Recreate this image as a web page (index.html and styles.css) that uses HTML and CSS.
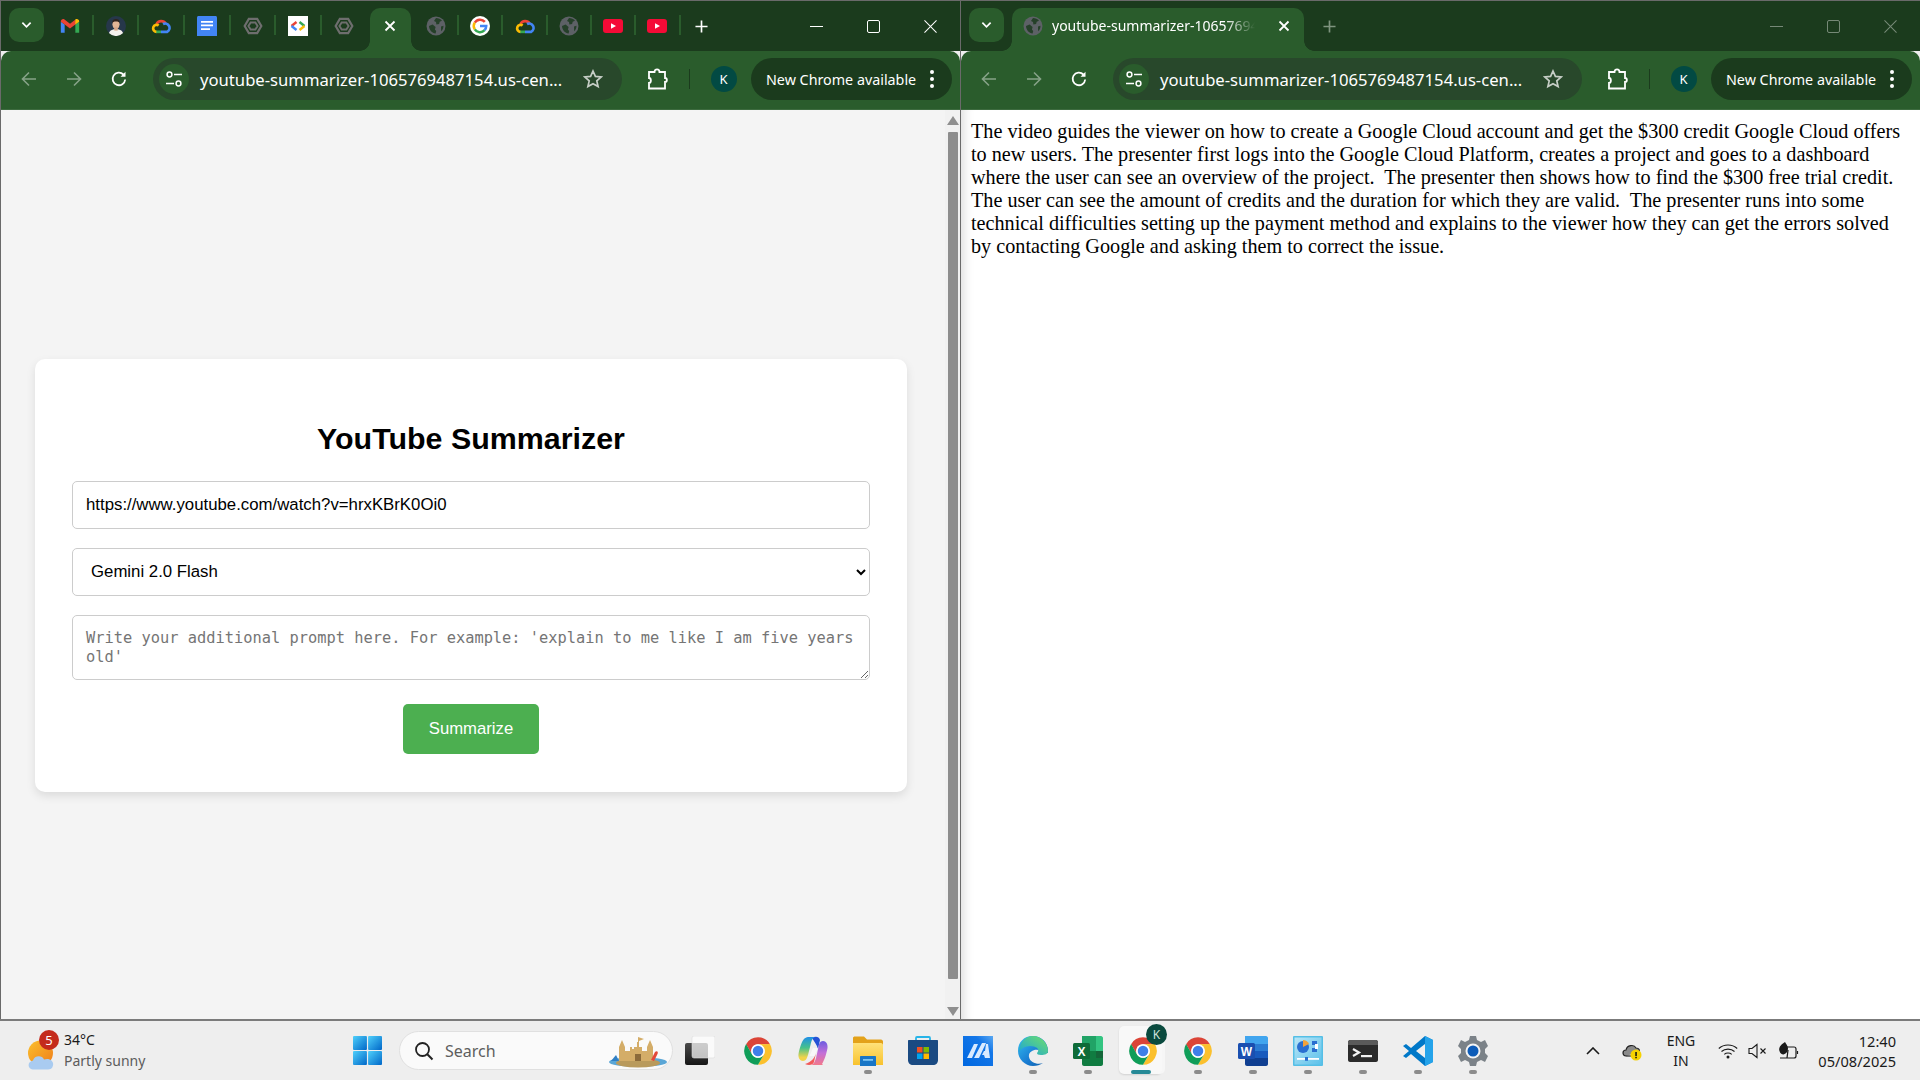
FILE: index.html
```html
<!DOCTYPE html>
<html lang="en">
<head>
<meta charset="utf-8">
<title>YouTube Summarizer</title>
<link rel="stylesheet" href="styles.css">
</head>
<body>
<svg class="defs" aria-hidden="true">
  <defs>
    <linearGradient id="gEdge" x1="0" y1="0" x2="1" y2="1"><stop offset="0" stop-color="#35c1f1"/><stop offset=".55" stop-color="#1b7fd4"/><stop offset="1" stop-color="#0c59a4"/></linearGradient>
    <linearGradient id="gEdge2" x1="0" y1="1" x2="1" y2="0"><stop offset="0" stop-color="#1aa3d9"/><stop offset="1" stop-color="#6fe06a"/></linearGradient>
    <linearGradient id="gCop1" x1="0" y1="0" x2="0" y2="1"><stop offset="0" stop-color="#1f8fe8"/><stop offset=".45" stop-color="#47c28a"/><stop offset=".85" stop-color="#f1d34a"/></linearGradient>
    <linearGradient id="gCop2" x1="0" y1="0" x2="0" y2="1"><stop offset="0" stop-color="#6a5be0"/><stop offset=".5" stop-color="#c36fd8"/><stop offset="1" stop-color="#f2788a"/></linearGradient>
    <linearGradient id="gWin" x1="0" y1="0" x2="1" y2="1"><stop offset="0" stop-color="#4fd0fb"/><stop offset="1" stop-color="#0067c8"/></linearGradient>
    <linearGradient id="gFolder" x1="0" y1="0" x2="0" y2="1"><stop offset="0" stop-color="#ffe27a"/><stop offset="1" stop-color="#f8c22e"/></linearGradient>
    <linearGradient id="gTile" x1="0" y1="1" x2="1" y2="0"><stop offset="0" stop-color="#0067e0"/><stop offset=".7" stop-color="#1477e8"/><stop offset="1" stop-color="#5aa8f2"/></linearGradient>
    <linearGradient id="gTask" x1="0" y1="0" x2="1" y2="1"><stop offset="0" stop-color="#b9e6f7"/><stop offset="1" stop-color="#5cc1ea"/></linearGradient>
    <linearGradient id="gSun" x1="0" y1="0" x2="1" y2="1"><stop offset="0" stop-color="#fbc02d"/><stop offset="1" stop-color="#ef7d1a"/></linearGradient>
    <linearGradient id="gDark" x1="0" y1="0" x2="0" y2="1"><stop offset="0" stop-color="#4a4a4a"/><stop offset="1" stop-color="#161616"/></linearGradient>

    <symbol id="chrome" viewBox="0 0 24 24">
      <path fill="#db4437" d="M2.47 6.5A11 11 0 0 1 21.53 6.5H12A5.5 5.5 0 0 0 7.24 14.75Z"/>
      <path fill="#fbc02d" d="M2.47 6.5A11 11 0 0 1 21.53 6.5H12A5.5 5.5 0 0 0 7.24 14.75Z" transform="rotate(120 12 12)"/>
      <path fill="#0f9d58" d="M2.47 6.5A11 11 0 0 1 21.53 6.5H12A5.5 5.5 0 0 0 7.24 14.75Z" transform="rotate(240 12 12)"/>
      <circle cx="12" cy="12" r="5.4" fill="#fff"/><circle cx="12" cy="12" r="4.2" fill="#3f7fe8"/>
    </symbol>
    <symbol id="gcloud" viewBox="0 0 24 24" fill="none" stroke-width="3.2">
      <path stroke="#ea4335" d="M6.6 9.6A6.2 6.2 0 0 1 17.6 9.2"/>
      <path stroke="#4285f4" d="M14.4 9.6A4.2 4.2 0 0 1 19.4 19H12"/>
      <path stroke="#34a853" d="M6 19H12"/>
      <path stroke="#fbbc04" d="M6.4 19A4.2 4.2 0 1 1 9.2 11.4"/>
    </symbol>
    <symbol id="gmail" viewBox="0 0 24 24">
      <path fill="#4285f4" d="M1 5.5V20h4.6V10.3L1 7Z"/>
      <path fill="#34a853" d="M23 5.5V20h-4.6V10.3L23 7Z"/>
      <path fill="#ea4335" d="M1 6.5C1 4 3.7 2.9 5.4 4.2L12 9.2l6.6-5 1 5L12 15 5.6 10.2 1 7Z"/>
      <path fill="#fbbc04" d="M18.4 4.3C20.300 2.900 23 4 23 6.500V7l-4.600 3.300Z"/>
    </symbol>
    <symbol id="avatar" viewBox="0 0 24 24">
      <circle cx="12" cy="12" r="12" fill="#26374a"/>
      <path fill="#f4f1ec" d="M3.500 20.500C5 16.500 9 16 12 16s7 .5 8.500 4.500A12 12 0 0 1 3.500 20.500Z"/>
      <ellipse cx="12" cy="10" rx="4.300" ry="5.600" fill="#e2b596"/>
      <rect x="10" y="13" width="4" height="4.500" fill="#d9a888"/>
      <path fill="#30241e" d="M7.500 9C7 4.500 10 3.600 12 3.600S17 4.500 16.500 9c-.5-2-2-2.500-4.500-2.500S8 7 7.500 9Z"/>
    </symbol>
    <symbol id="docs" viewBox="0 0 20 20">
      <path fill="#4285f4" d="M0 1.500C0 .7.700 0 1.500 0h17c.8 0 1.500.7 1.500 1.500v18.500H0Z"/>
      <path fill="#fff" d="M4 5h12v1.700H4ZM4 8.600h12v1.700H4ZM4 12.200h9v1.700H4Z"/>
    </symbol>
    <symbol id="hex" viewBox="0 0 24 24" fill="none" stroke="#6e6e6e">
      <path stroke-width="2.600" d="M7 3.500h10L22 12l-5 8.500H7L2 12Z"/>
      <path stroke-width="2.300" d="M9.200 7.800h5.600L17.500 12l-2.700 4.200H9.200L6.500 12Z"/>
    </symbol>
    <symbol id="devcode" viewBox="0 0 20 20">
      <rect width="20" height="20" fill="#fff"/>
      <path fill="none" stroke="#ea4335" stroke-width="2.400" d="M8.500 6 3.500 10"/><path fill="none" stroke="#4285f4" stroke-width="2.400" d="M3.500 10 8.500 14"/>
      <path fill="none" stroke="#34a853" stroke-width="2.400" d="M11.500 6 16.500 10"/><path fill="none" stroke="#fbbc04" stroke-width="2.400" d="M16.500 10 11.500 14"/>
    </symbol>
    <symbol id="globe" viewBox="0 0 20 20">
      <circle cx="10" cy="10" r="9.500" fill="#5d6166"/>
      <path fill="#1b3b1e" opacity=".85" d="M10 2c2.500 0 4.600 1 6 2.700l-2.300 1-.6 2.200-2.700.6-.4-2.500L8 5ZM3 10l3.600-1.500 3 2.400-.7 2.600 1.300 1.600-.6 2.400C6 17.300 3.200 14 3 10ZM15 10.500l2.500-.8c0 2.300-.9 4.200-2.400 5.500Z"/>
    </symbol>
    <symbol id="yt" viewBox="0 0 20 14">
      <rect width="20" height="14" rx="3" fill="#f40b36"/>
      <path fill="#fff" d="M8 4.200 13 7 8 9.800Z"/>
    </symbol>
    <symbol id="gg" viewBox="0 0 24 24">
      <circle cx="12" cy="12" r="12" fill="#fff"/>
      <path fill="none" stroke-width="3" stroke="#ea4335" d="M17.800 7A7.500 7.500 0 0 0 5.700 8"/>
      <path fill="none" stroke-width="3" stroke="#fbbc04" d="M5.700 8A7.500 7.500 0 0 0 5.700 16"/>
      <path fill="none" stroke-width="3" stroke="#34a853" d="M5.700 16A7.500 7.500 0 0 0 17.500 17"/>
      <path fill="none" stroke-width="3" stroke="#4285f4" d="M17.500 17A7.500 7.500 0 0 0 19.500 12H12"/>
    </symbol>
    <symbol id="chev" viewBox="0 0 12 8"><path d="M1.500 1.500 6 6l4.500-4.500" fill="none" stroke="#fff" stroke-width="1.900"/></symbol>
    <symbol id="closex" viewBox="0 0 12 12"><path d="M1.500 1.500l9 9M10.500 1.500l-9 9" fill="none" stroke="#fff" stroke-width="1.800"/></symbol>
    <symbol id="plus" viewBox="0 0 14 14"><path d="M7 .5v13M.5 7h13" fill="none" stroke="currentColor" stroke-width="1.800"/></symbol>
    <symbol id="back" viewBox="0 0 18 18"><path d="M16 9H2.500M9 2.500 2.500 9 9 15.500" fill="none" stroke="currentColor" stroke-width="1.600"/></symbol>
    <symbol id="fwd" viewBox="0 0 18 18"><path d="M2 9h13.500M9 2.500 15.500 9 9 15.500" fill="none" stroke="currentColor" stroke-width="1.600"/></symbol>
    <symbol id="reload" viewBox="0 0 18 18"><path d="M15.200 9.500A6.300 6.300 0 1 1 13.400 4.500" fill="none" stroke="currentColor" stroke-width="1.800"/><path d="M15.500 1.800v5h-5Z" fill="currentColor"/></symbol>
    <symbol id="tune" viewBox="0 0 18 18"><g fill="none" stroke="#fff" stroke-width="1.500"><circle cx="4.500" cy="4.500" r="2.400"/><circle cx="13.500" cy="13.500" r="2.400"/><path d="M9 4.500h8M1 13.500h8"/></g></symbol>
    <symbol id="star" viewBox="0 0 20 20"><path d="M10 2l2.400 5.400 5.800.6-4.400 3.900 1.300 5.700L10 14.700l-5.100 2.900 1.300-5.700L1.800 8l5.800-.6Z" fill="none" stroke="#c6cec6" stroke-width="1.700"/></symbol>
    <symbol id="puzzle" viewBox="0 0 22 22"><path d="M3 4h5.500c0-3.500 5-3.500 5 0H19v6c2.500 0 2.500 4 0 4v6.500H3V15c2.500 0 2.500-5 0-5Z" fill="none" stroke="#fff" stroke-width="1.800"/></symbol>
    <symbol id="dots" viewBox="0 0 6 20"><circle cx="3" cy="3" r="2" fill="#fff"/><circle cx="3" cy="10" r="2" fill="#fff"/><circle cx="3" cy="17" r="2" fill="#fff"/></symbol>

    <symbol id="start" viewBox="0 0 30 30"><g fill="url(#gWin)"><rect width="14.400" height="14.400" rx="1"/><rect x="15.600" width="14.400" height="14.400" rx="1"/><rect y="15.600" width="14.400" height="14.400" rx="1"/><rect x="15.600" y="15.600" width="14.400" height="14.400" rx="1"/></g></symbol>
    <symbol id="search" viewBox="0 0 20 20"><circle cx="8.500" cy="8.500" r="6.500" fill="none" stroke="#222" stroke-width="1.800"/><path d="M13.300 13.300 18.500 18.500" stroke="#222" stroke-width="2"/></symbol>
    <symbol id="castle" viewBox="0 0 60 34">
      <ellipse cx="30" cy="28" rx="29" ry="5" fill="#5aa6d6"/><ellipse cx="30" cy="29" rx="22" ry="4.500" fill="#b99a5c"/>
      <path fill="#d4ad68" d="M11 27V13l3-7 3 7v4h5v-4h2v2h2v-2h3V8h1V3l6 2-5 2v6h3v4h5v-4l3-7 3 7v14Z"/>
      <rect x="27" y="20" width="6" height="7" fill="#8b6a3a"/>
      <path fill="#e3483a" d="M47 18c2-2 4 0 2 3l-3 6-3-1Z"/>
      <path fill="#2f7fc4" d="M3 27l5-6 3 6Z"/>
    </symbol>
    <symbol id="weather" viewBox="0 0 28 30">
      <circle cx="12.500" cy="12.500" r="12.500" fill="url(#gSun)"/>
      <path fill="#a9cbf0" d="M6 29c-7 0-7-8-1-9 1-5 9-6 11-1 6-2 10 2 9 6-.5 3-3 4-5 4Z"/>
    </symbol>
    <symbol id="taskview" viewBox="0 0 30 29">
      <rect x="0" y="7" width="23" height="22" rx="2" fill="url(#gDark)"/>
      <rect x="7" y="0" width="23" height="22" rx="2" fill="#fff" fill-opacity=".72" stroke="#dcdcdc" stroke-width=".6"/>
    </symbol>
    <symbol id="copilot" viewBox="0 0 30 30">
      <path fill="#2552d6" d="M14 2C17 0 21 0 22 4L20 13C19 9 16 5 14 2Z"/>
      <path fill="#f25a5a" d="M7 28C11 30 15 29 16 26L18 17C17 22 13 26 7 28Z"/>
      <path fill="url(#gCop1)" d="M10 1H17C14 2 13.500 5 12.500 9L10 19C9 22 8 25 5 25 2 25 0 22 .5 18 1.500 12 4 5 6 3 7 2 8.500 1 10 1Z"/>
      <path fill="url(#gCop2)" d="M25 29H13C16 28.500 17 25 18 22L20.500 11C21 8 22 5 25 5 28 5 30 8 29.500 12 28.500 18 26 25 24 28Z"/>
      <path fill="#fff" opacity=".6" d="M15 12H20L16.500 20H11.500Z"/>
    </symbol>
    <symbol id="folder" viewBox="0 0 30 30" preserveAspectRatio="none">
      <path fill="#e3a21a" d="M0 2c0-1 .8-1.500 2-1.500h9l3 3h14c1 0 2 1 2 2v4H0Z"/>
      <path fill="url(#gFolder)" d="M0 7h28c1 0 2 1 2 2v20H0Z"/>
      <path fill="#1976c6" d="M8 20h14c.6 0 1 .4 1 1v9H7V21c0-.6.4-1 1-1Z"/>
      <rect x="10" y="23" width="10" height="1.800" fill="#7cc4f3"/>
    </symbol>
    <symbol id="store" viewBox="0 0 30 30" preserveAspectRatio="none">
      <path fill="none" stroke="#27b4e8" stroke-width="1.800" d="M8 5V2c0-.6.5-1 1-1h12c.5 0 1 .4 1 1v3"/>
      <path fill="#1a4a82" d="M1 4h28c.6 0 1 .4 1 1v19c0 3-2 5-5 5H5c-3 0-5-2-5-5V5c0-.6.4-1 1-1Z"/>
      <rect x="9" y="11" width="5.500" height="5.500" fill="#f25022"/><rect x="15.500" y="11" width="5.500" height="5.500" fill="#7fba00"/>
      <rect x="9" y="17.500" width="5.500" height="5.500" fill="#00a4ef"/><rect x="15.500" y="17.500" width="5.500" height="5.500" fill="#ffb900"/>
    </symbol>
    <symbol id="ma" viewBox="0 0 30 30">
      <rect width="30" height="30" fill="url(#gTile)"/>
      <path fill="#d9eaff" d="M11 8h4L9 22H4ZM19 7h4l-7 15h-5ZM23 8h2l2 14h-5l-1-3h-2l2-4h1Z"/>
    </symbol>
    <symbol id="edge" viewBox="0 0 30 30">
      <path fill="url(#gEdge)" d="M15 0C6 0 0 6 0 15c0 8 7 15 15 15 4 0 7-1 10-3-5 2-13 0-14-6-1-5 5-8 9-7l10 3c1-2 0-1 0-2C30 7 24 0 15 0Z"/>
      <path fill="url(#gEdge2)" d="M15 0C23 0 30 7 30 15c0 3-3 4-7 4-3 0-4-1-4-2 2-2 2-5-3-6.500C10 8.500 3 12 1 16 1 7 7 0 15 0Z"/>
    </symbol>
    <symbol id="excel" viewBox="0 0 30 30">
      <path fill="#21a366" d="M9 0h14v15H9Z"/><path fill="#33c481" d="M23 0h5c1 0 2 1 2 2v13h-7Z"/>
      <path fill="#107c41" d="M9 15h21v13c0 1-1 2-2 2H11c-1 0-2-1-2-2Z"/><path fill="#185c37" d="M23 15h7v7h-7Z" opacity=".7"/>
      <rect y="7" width="17" height="16" rx="1.500" fill="#0e6b38"/>
      <text x="8.500" y="19.500" class="svgletter">X</text>
    </symbol>
    <symbol id="word" viewBox="0 0 30 30">
      <path fill="#41a5ee" d="M7 0h21c1 0 2 1 2 2v6H7Z"/><path fill="#2b7cd3" d="M7 8h23v7H7Z"/><path fill="#185abd" d="M7 15h23v7H7Z"/><path fill="#103f91" d="M7 22h23v6c0 1-1 2-2 2H9c-1 0-2-1-2-2Z"/>
      <rect y="7" width="17" height="16" rx="1.500" fill="#1a4fb0"/>
      <text x="8.500" y="19.500" class="svgletter">W</text>
    </symbol>
    <symbol id="task" viewBox="0 0 30 30">
      <rect width="30" height="30" rx="1" fill="#55bfe6"/><rect x="1.500" y="1.500" width="27" height="27" fill="url(#gTask)"/>
      <circle cx="10" cy="11" r="6" fill="#2a6fd0"/><path d="M10 11V4a7 7 0 0 1 6 4Z" fill="#f3a33a"/>
      <rect x="19" y="5" width="5" height="4" fill="#2a6fd0"/><rect x="19" y="12" width="5" height="4" fill="#2a6fd0"/><rect x="22" y="8" width="3" height="5" fill="#fff"/>
      <rect x="4" y="22" width="22" height="1.800" fill="#fff"/><rect x="12" y="21" width="3" height="3.800" fill="#2a6fd0"/>
    </symbol>
    <symbol id="term" viewBox="0 0 30 22">
      <path fill="#2b2b2b" d="M2 0h26c1 0 2 1 2 2v18c0 1-1 2-2 2H2c-1 0-2-1-2-2V2C0 1 1 0 2 0Z"/>
      <path fill="#5a5a5a" d="M2 0h26c1 0 2 1 2 2v3H0V2C0 1 1 0 2 0Z"/>
      <path d="M5 9l6 3.500L5 16" fill="none" stroke="#f2f2f2" stroke-width="2.200"/><rect x="13" y="15" width="11" height="2.200" fill="#f2f2f2"/>
    </symbol>
    <symbol id="vscode" viewBox="0 0 30 30">
      <path fill="#0078c8" d="M22 0 30 4v22l-8 4L8 18l-5 4-3-2 6-5-6-5 3-2 5 4Z"/>
      <path fill="#24a3ea" d="M22 0 30 4v22l-8 4Z"/>
      <path fill="#eef0f0" d="M22 8v14l-9-7Z"/>
    </symbol>
    <symbol id="gear" viewBox="0 0 30 30">
      <path fill="#7b8288" d="M12 0h6l1 4 4 2 4-2 3 6-3 3v4l3 3-3 6-4-2-4 2-1 4h-6l-1-4-4-2-4 2-3-6 3-3v-4L0 10l3-6 4 2 4-2Z"/>
      <circle cx="15" cy="15" r="7.500" fill="#f4f4f4"/><circle cx="15" cy="15" r="5.500" fill="#0d5cb8"/>
    </symbol>
    <symbol id="caret" viewBox="0 0 14 8"><path d="M1 7 7 1l6 6" fill="none" stroke="#1a1a1a" stroke-width="1.600"/></symbol>
    <symbol id="cloudwarn" viewBox="0 0 22 20">
      <path d="M5 15C1 15 1 9 5 9c1-5 8-6 10-2 3 0 4 2 3 4" fill="#8a8a8a" stroke="#222" stroke-width="1.200"/>
      <path d="M5 15h5" stroke="#222" stroke-width="1.200"/>
      <circle cx="15" cy="14" r="5.500" fill="#f6d200"/><rect x="14.300" y="11" width="1.500" height="4" fill="#111"/><rect x="14.300" y="15.800" width="1.500" height="1.500" fill="#111"/>
    </symbol>
    <symbol id="wifi" viewBox="0 0 20 16"><g fill="none" stroke="#1a1a1a" stroke-width="1.100"><path d="M.8 5.500C5.800.8 14.200.8 19.200 5.500"/><path d="M3.500 8.500c3.500-3.200 9.500-3.200 13 0"/><path d="M6.300 11.300c2-1.800 5.400-1.800 7.400 0"/></g><circle cx="10" cy="14" r="1.500" fill="#1a1a1a"/></symbol>
    <symbol id="mute" viewBox="0 0 20 16"><g fill="none" stroke="#1a1a1a" stroke-width="1.100"><path d="M1 5.500h3L9 1.500v13L4 10.500H1Z"/><path d="M12.500 5.500l5 5M17.500 5.500l-5 5"/></g></symbol>
    <symbol id="battery" viewBox="0 0 22 18"><g fill="none" stroke="#1a1a1a" stroke-width="1.200"><path d="M8 5h8c1.500 0 2 .8 2 2v7c0 1-.5 2-2 2H2"/><path d="M19.500 9v3"/><path d="M10 8l-1 8"/></g><path d="M7 0C2 3 .5 6 1.500 9c.5 2 2 3.500 4 3.500 3-1 4.500-3 4.500-6C10 4 8 2 7 0Z" fill="#1a1a1a"/></symbol>
  </defs>
</svg>

<div class="desktop">
  <section class="window window-left">
    <header class="tabstrip">
      <span class="tabsearch"><svg class="i10"><use href="#chev"/></svg></span>
      <div class="tablist">
        <span class="ptab sep"><svg class="i20"><use href="#gmail"/></svg></span>
        <span class="ptab sep"><svg class="i20 av"><use href="#avatar"/></svg></span>
        <span class="ptab sep"><svg class="i20"><use href="#gcloud"/></svg></span>
        <span class="ptab sep"><svg class="i20"><use href="#docs"/></svg></span>
        <span class="ptab sep"><svg class="i20"><use href="#hex"/></svg></span>
        <span class="ptab sep"><svg class="i20"><use href="#devcode"/></svg></span>
        <span class="ptab"><svg class="i20"><use href="#hex"/></svg></span>
        <span class="ptab-active"><svg class="i12"><use href="#closex"/></svg></span>
        <span class="ptab ptab-s sep"><svg class="i20"><use href="#globe"/></svg></span>
        <span class="ptab ptab-s sep"><svg class="i20"><use href="#gg"/></svg></span>
        <span class="ptab ptab-s sep"><svg class="i20"><use href="#gcloud"/></svg></span>
        <span class="ptab ptab-s sep"><svg class="i20"><use href="#globe"/></svg></span>
        <span class="ptab ptab-s sep"><svg class="i20 yt"><use href="#yt"/></svg></span>
        <span class="ptab ptab-s sep"><svg class="i20 yt"><use href="#yt"/></svg></span>
      </div>
      <svg class="newtab"><use href="#plus"/></svg>
      <div class="winctl">
        <span class="winbtn"><span class="wmin"></span></span>
        <span class="winbtn"><span class="wmax"></span></span>
        <span class="winbtn"><svg class="wx" viewBox="0 0 14 14"><path d="M.5.500l13 13M13.500.500l-13 13"/></svg></span>
      </div>
    </header>
    <div class="toolbar">
      <svg class="navbtn dim"><use href="#back"/></svg>
      <svg class="navbtn dim"><use href="#fwd"/></svg>
      <svg class="navbtn"><use href="#reload"/></svg>
      <div class="omnibox">
        <span class="chip"><svg class="i16"><use href="#tune"/></svg></span>
        <span class="url">youtube-summarizer-1065769487154.us-cen...</span>
        <svg class="star"><use href="#star"/></svg>
      </div>
      <svg class="puzzle"><use href="#puzzle"/></svg>
      <span class="tbsep"></span>
      <span class="profile">K</span>
      <span class="update">New Chrome available<svg class="dots"><use href="#dots"/></svg></span>
    </div>
    <div class="viewport-left">
      <main class="page">
        <form class="card">
          <h1 class="title">YouTube Summarizer</h1>
          <input class="field field-input" type="text" value="https://www.youtube.com/watch?v=hrxKBrK0Oi0">
          <select class="field field-select"><option>Gemini 2.0 Flash</option></select>
          <textarea class="field field-area" placeholder="Write your additional prompt here. For example: 'explain to me like I am five years old'"></textarea>
          <button class="submit" type="button">Summarize</button>
        </form>
      </main>
      <div class="scrollbar">
        <span class="arrow-up"></span>
        <span class="thumb"></span>
        <span class="arrow-down"></span>
      </div>
    </div>
  </section>

  <section class="window window-right">
    <header class="tabstrip">
      <span class="tabsearch"><svg class="i10"><use href="#chev"/></svg></span>
      <div class="tablist">
        <span class="fulltab">
          <svg class="i20"><use href="#globe"/></svg>
          <span class="tabtitle">youtube-summarizer-10657694</span>
          <svg class="i12"><use href="#closex"/></svg>
        </span>
      </div>
      <svg class="newtab newtab-dim"><use href="#plus"/></svg>
      <div class="winctl winctl-dim">
        <span class="winbtn"><span class="wmin"></span></span>
        <span class="winbtn"><span class="wmax"></span></span>
        <span class="winbtn"><svg class="wx" viewBox="0 0 14 14"><path d="M.5.500l13 13M13.500.500l-13 13"/></svg></span>
      </div>
    </header>
    <div class="toolbar">
      <svg class="navbtn dim"><use href="#back"/></svg>
      <svg class="navbtn dim"><use href="#fwd"/></svg>
      <svg class="navbtn"><use href="#reload"/></svg>
      <div class="omnibox">
        <span class="chip"><svg class="i16"><use href="#tune"/></svg></span>
        <span class="url">youtube-summarizer-1065769487154.us-cen...</span>
        <svg class="star"><use href="#star"/></svg>
      </div>
      <svg class="puzzle"><use href="#puzzle"/></svg>
      <span class="tbsep"></span>
      <span class="profile">K</span>
      <span class="update">New Chrome available<svg class="dots"><use href="#dots"/></svg></span>
    </div>
    <div class="viewport-right">
      <p class="summary">The video guides the viewer on how to create a Google Cloud account and get the $300 credit Google Cloud offers to new users. The presenter first logs into the Google Cloud Platform, creates a project and goes to a dashboard where the user can see an overview of the project.&nbsp; The presenter then shows how to find the $300 free trial credit.&nbsp; The user can see the amount of credits and the duration for which they are valid.&nbsp; The presenter runs into some technical difficulties setting up the payment method and explains to the viewer how they can get the errors solved by contacting Google and asking them to correct the issue.</p>
    </div>
  </section>
</div>

<footer class="taskbar">
  <div class="weather">
    <span class="weather-icon"><svg class="wicon"><use href="#weather"/></svg><span class="wbadge">5</span></span>
    <span class="wtext"><span class="wtemp">34°C</span><span class="wdesc">Partly sunny</span></span>
  </div>
  <div class="pins">
    <span class="pin"><svg class="ic-start"><use href="#start"/></svg></span>
    <div class="searchbox">
      <svg class="ic-search"><use href="#search"/></svg>
      <span class="searchtext">Search</span>
      <svg class="ic-castle"><use href="#castle"/></svg>
    </div>
    <span class="pin pin-first"><svg class="ic-tv"><use href="#taskview"/></svg></span>
    <span class="pin"><svg class="ic30"><use href="#chrome"/></svg></span>
    <span class="pin"><svg class="ic30"><use href="#copilot"/></svg></span>
    <span class="pin run"><svg class="ic30"><use href="#folder"/></svg></span>
    <span class="pin"><svg class="ic30"><use href="#store"/></svg></span>
    <span class="pin"><svg class="ic30"><use href="#ma"/></svg></span>
    <span class="pin run"><svg class="ic30"><use href="#edge"/></svg></span>
    <span class="pin run"><svg class="ic30"><use href="#excel"/></svg></span>
    <span class="pin active"><svg class="ic30"><use href="#chrome"/></svg><span class="pbadge">K</span></span>
    <span class="pin run"><svg class="ic30"><use href="#chrome"/></svg></span>
    <span class="pin run"><svg class="ic30"><use href="#word"/></svg></span>
    <span class="pin run"><svg class="ic30"><use href="#task"/></svg></span>
    <span class="pin run"><svg class="ic-term"><use href="#term"/></svg></span>
    <span class="pin run"><svg class="ic30"><use href="#vscode"/></svg></span>
    <span class="pin run"><svg class="ic30"><use href="#gear"/></svg></span>
  </div>
  <div class="tray">
    <svg class="t-caret"><use href="#caret"/></svg>
    <svg class="t-cloud"><use href="#cloudwarn"/></svg>
    <span class="lang"><span>ENG</span><span>IN</span></span>
    <svg class="t-wifi"><use href="#wifi"/></svg>
    <svg class="t-mute"><use href="#mute"/></svg>
    <svg class="t-batt"><use href="#battery"/></svg>
    <span class="clock"><span>12:40</span><span>05/08/2025</span></span>
  </div>
</footer>
</body>
</html>
```

FILE: styles.css
```css
* { box-sizing: border-box; }
html, body { height: 100%; }
body {
  margin: 0;
  height: 1080px;
  overflow: hidden;
  display: flex;
  flex-direction: column;
  background: #eee;
  font-family: "Noto Sans", "Open Sans", sans-serif;
}
.defs { width: 0; height: 0; position: absolute; }
svg { display: block; flex: none; }
.svgletter { font: 700 12px "Liberation Sans", sans-serif; fill: #fff; text-anchor: middle; }

.desktop {
  height: 1021px;
  display: grid;
  grid-template-columns: 960px 960px;
  border-bottom: 2px solid #7b7b7b;
}
.window { display: flex; flex-direction: column; min-width: 0; border-top: 1px solid #6a6a6a; border-left: 1px solid #6a6a6a; }

/* tab strip */
.tabstrip {
  height: 50px;
  background: #1b3b1d;
  display: flex;
  align-items: flex-start;
  padding-top: 7px;
  flex: none;
}
.tabsearch {
  width: 35px; height: 34px; margin-left: 8px;
  background: #2a5c2c;
  border-radius: 10px;
  display: flex; align-items: center; justify-content: center;
  flex: none;
}
.i10 { width: 11px; height: 8px; }
.i12 { width: 12px; height: 12px; }
.i16 { width: 18px; height: 18px; }
.i20 { width: 20px; height: 20px; }
.yt { height: 14px; }
.tablist { display: flex; height: 43px; margin-left: 3px; flex: none; }
.ptab {
  width: 45.7px; height: 36px;
  display: flex; align-items: center; justify-content: center;
  position: relative;
}
.ptab-s { width: 44.3px; }
.sep::after {
  content: "";
  position: absolute; right: -1px; top: 7px;
  width: 2px; height: 20px;
  background: #2a5c2c;
}
.ptab-active {
  width: 41px; height: 43px; margin: 0 3px 0 3px;
  background: #2a5c2c;
  border-radius: 10px 10px 0 0;
  display: flex; align-items: flex-start; justify-content: center;
  padding-top: 12px;
  position: relative;
}
.ptab-active::before, .ptab-active::after, .fulltab::before, .fulltab::after {
  content: "";
  position: absolute; bottom: 0;
  width: 10px; height: 10px;
}
.ptab-active::before, .fulltab::before { left: -10px; background: radial-gradient(circle at 0 0, transparent 9.500px, #2a5c2c 10px); }
.ptab-active::after, .fulltab::after { right: -10px; background: radial-gradient(circle at 100% 0, transparent 9.500px, #2a5c2c 10px); }
.fulltab {
  width: 292px; height: 43px; margin-left: 5px;
  background: #2a5c2c;
  border-radius: 10px 10px 0 0;
  display: flex; align-items: flex-start;
  padding: 8px 14px 0 11px;
  position: relative;
  color: #fff;
}
.fulltab .i12 { margin: 4px 0 0 10px; }
.tabtitle {
  flex: 1; min-width: 0;
  margin-left: 9px;
  font-size: 14px; line-height: 20px;
  white-space: nowrap;
  -webkit-mask-image: linear-gradient(90deg, #000 80%, transparent 94%);
  mask-image: linear-gradient(90deg, #000 80%, transparent 94%);
}
.newtab { width: 13px; height: 13px; margin: 12px 0 0 15px; color: #fff; }
.newtab-dim { color: #7f947f; margin-left: 19px; }
.winctl { display: flex; margin-left: auto; height: 36px; align-items: center; padding-right: 1px; }
.winbtn { width: 57px; height: 30px; display: flex; align-items: center; justify-content: center; }
.wmin { width: 13px; height: 1px; background: #fff; }
.wmax { width: 13px; height: 13px; border: 1px solid #fff; border-radius: 2px; }
.wx { width: 13px; height: 13px; }
.wx path { fill: none; stroke: #fff; stroke-width: 1.100; }
.winctl-dim { opacity: .4; }

/* toolbar */
.toolbar {
  height: 59px;
  background: #2a5c2c;
  border-radius: 10px 10px 0 0;
  display: flex; align-items: center;
  padding: 0 8px 2px 0;
  flex: none;
  color: #fff;
  border-bottom: 1px solid #3d6b3f;
}
.navbtn { width: 18px; height: 18px; margin-left: 27px; color: #fff; }
.navbtn:first-child { margin-left: 19px; }
.navbtn.dim { color: #86a287; }
.omnibox {
  width: 469px; height: 42px;
  margin-left: 25px;
  background: #28482b;
  border-radius: 21px;
  display: flex; align-items: center;
  padding-left: 6px;
  flex: none;
}
.chip {
  width: 30px; height: 30px;
  background: #2a5c2c;
  border-radius: 50%;
  display: flex; align-items: center; justify-content: center;
  flex: none;
}
.url { margin-left: 11px; padding-top: 1px; font-size: 16.650px; color: #fff; white-space: nowrap; line-height: 24px; width: 372px; }
.star { width: 20px; height: 20px; margin-left: 11px; }
.puzzle { width: 22px; height: 22px; margin-left: 23.600px; }
.tbsep { width: 2px; height: 20px; background: #1b3b1d; margin-left: 21px; }
.profile {
  width: 26px; height: 26px; margin-left: 21px;
  border-radius: 50%;
  background: #024a43;
  color: #fff;
  font-size: 13px; line-height: 26px; text-align: center;
  flex: none;
}
.update {
  width: 201px; height: 42px; margin-left: 14.400px;
  background: #1b3b1d;
  border-radius: 21px;
  display: flex; align-items: center;
  padding-left: 15px;
  font-size: 14.300px;
  white-space: nowrap;
  flex: none;
}
.dots { width: 6px; height: 20px; margin-left: 13px; }

/* left page */
.viewport-left { flex: 1; min-height: 0; display: flex; background: #f4f4f4; }
.page { flex: 1; min-width: 0; padding: 21px 38px 0 34px; display: flex; align-items: center; }
.card {
  width: 100%;
  height: 433px;
  background: #fff;
  border-radius: 10px;
  padding: 61px 37px 0;
  box-shadow: 0 4px 10px rgba(0,0,0,.1);
  display: flex; flex-direction: column; align-items: center;
}
.title { margin: 0 0 24px; font: 700 30.400px/37px "Liberation Sans", Arial, sans-serif; color: #000; }
.field {
  width: 100%;
  border: 1px solid #ccc;
  border-radius: 5px;
  background: #fff;
  font: 16.800px "Liberation Sans", Arial, sans-serif;
  color: #000;
  flex: none;
}
.field-input { height: 48px; padding: 0 13px; margin-bottom: 19px; }
.field-select { height: 48px; padding: 0 14px; margin-bottom: 19px; }
.field-area {
  height: 65px; padding: 13px 13px 0; margin-bottom: 24px;
  font: 15.370px/19px "DejaVu Sans Mono", monospace;
  resize: vertical;
}
.field-area::placeholder { color: #757575; }
.submit {
  width: 136px; height: 50px;
  border: 0; border-radius: 5px;
  background: #4caf50;
  color: #fff;
  font: 16.700px "Liberation Sans", Arial, sans-serif;
}

.scrollbar {
  width: 15px; flex: none;
  background: #f1f1f1;
  display: flex; flex-direction: column; align-items: center;
  padding: 6px 0 3px;
}
.arrow-up { width: 0; height: 0; border: 6px solid transparent; border-top: 0; border-bottom: 9px solid #8f8f8f; flex: none; }
.arrow-down { width: 0; height: 0; border: 6px solid transparent; border-bottom: 0; border-top: 9px solid #8f8f8f; flex: none; }
.thumb { width: 10px; flex: 1; margin: 7px 0 28px; background: #8d8d8d; border-radius: 1px; }

/* right page */
.viewport-right {
  flex: 1; min-height: 0;
  background: #fff;
  padding: 10px 10px 8px;
  box-shadow: inset 14px 0 12px -12px rgba(0,0,0,.16);
}
.summary { margin: 0; font: 20.200px/23px "Liberation Serif", "Times New Roman", serif; color: #000; }

/* taskbar */
.taskbar {
  flex: 1;
  background: #eeeeee;
  display: flex; align-items: center;
  position: relative;
  color: #1a1a1a;
}
.weather { width: 340px; display: flex; align-items: center; padding-left: 28px; flex: none; }
.weather-icon { width: 36px; height: 40px; position: relative; display: block; flex: none; }
.wicon { width: 28px; height: 31px; position: absolute; left: 0; top: 9px; }
.wbadge {
  position: absolute; left: 11px; top: -1px;
  width: 20px; height: 20px; border-radius: 50%;
  background: #c42b1c; color: #fff;
  font-size: 13px; line-height: 20px; text-align: center;
}
.wtext { display: flex; flex-direction: column; font-size: 14px; line-height: 21px; padding-bottom: 2px; }
.wtemp { color: #1a1a1a; }
.wdesc { color: #5c5c5c; }

.pins { display: flex; align-items: center; height: 59px; flex: none; }
.pin {
  width: 55px; height: 59px;
  display: flex; align-items: center; justify-content: center;
  position: relative;
  flex: none;
}
.pin-first { margin-left: 2px; }
.run::after {
  content: "";
  position: absolute; left: 50%; bottom: 6px;
  width: 8px; height: 4px; margin-left: -4px;
  border-radius: 2px;
  background: #8c8c8c;
}
.active::before {
  content: "";
  position: absolute; left: 4px; top: 5px;
  width: 43px; height: 48px;
  border-radius: 5px;
  background: #f8f8f8;
  box-shadow: 3px 0 0 #f6f6f6, 0 1px 2px rgba(0,0,0,.12);
}
.active::after {
  content: "";
  position: absolute; left: 50%; bottom: 6px;
  width: 20px; height: 4px; margin-left: -12px;
  border-radius: 2px;
  background: #268a97;
}
.active svg { position: relative; }
.pbadge {
  position: absolute; left: 31px; top: 3px;
  width: 21px; height: 21px; border-radius: 50%;
  background: #0a4a3e; color: #cfe3dd;
  font-size: 12px; line-height: 21px; text-align: center;
}
.ic30 { width: 30px; height: 30px; }
.ic-term { width: 30px; height: 22px; }
.ic-tv { width: 30px; height: 29px; margin-right: 5px; }
.ic-start { width: 29px; height: 29px; }
.searchbox {
  width: 274px; height: 39px;
  margin-left: 4px;
  border-radius: 20px;
  background: #fafafa;
  border: 1px solid #e0e0e0;
  display: flex; align-items: center;
  padding-left: 14px;
  flex: none;
}
.ic-search { width: 20px; height: 20px; }
.searchtext { margin-left: 11px; font-size: 16px; color: #5e5e5e; }
.ic-castle { width: 60px; height: 34px; margin-left: auto; margin-right: 4px; }

.tray { flex: 1; display: flex; align-items: center; padding-left: 86px; }
.t-caret { width: 14px; height: 8px; }
.t-cloud { width: 22px; height: 20px; margin-left: 21px; }
.lang { width: 50px; margin-left: 13px; display: flex; flex-direction: column; align-items: center; font-size: 14px; line-height: 20px; }
.t-wifi { width: 20px; height: 16px; margin-left: 12px; }
.t-mute { width: 20px; height: 16px; margin-left: 10px; }
.t-batt { width: 22px; height: 18px; margin-left: 10px; }
.clock { margin-left: auto; margin-right: 24px; display: flex; flex-direction: column; align-items: flex-end; font-size: 14.600px; line-height: 20px; }
```
